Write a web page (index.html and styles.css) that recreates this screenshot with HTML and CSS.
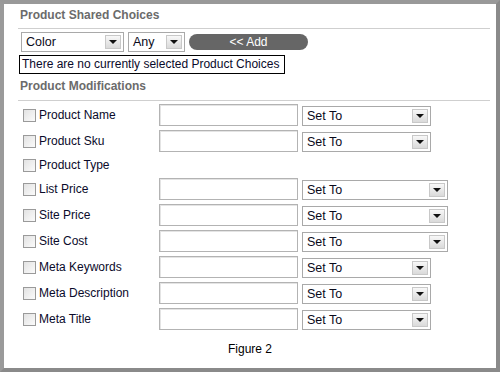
FILE: index.html
```html
<!DOCTYPE html>
<html lang="en">
<head>
    <meta charset="UTF-8">
    <title>Product Modifications</title>
    <link rel="stylesheet" href="styles.css">
</head>
<body>
    <div class="frame">
        <div class="section-title first">Product Shared Choices</div>
        <div class="choice-bar">
            <div class="select sel-color"><span>Color</span><span class="arrow"></span></div>
            <div class="select sel-any"><span>Any</span><span class="arrow"></span></div>
            <button class="add-btn">&lt;&lt; Add</button>
        </div>
        <div class="notice">There are no currently selected Product Choices</div>

        <div class="section-title">Product Modifications</div>
        <div class="mods">
            <div class="row">
                <label class="field"><input type="checkbox">Product Name</label>
                <input class="text" type="text">
                <div class="select set-short"><span>Set To</span><span class="arrow"></span></div>
            </div>
            <div class="row">
                <label class="field"><input type="checkbox">Product Sku</label>
                <input class="text" type="text">
                <div class="select set-short"><span>Set To</span><span class="arrow"></span></div>
            </div>
            <div class="row only-check">
                <label class="field"><input type="checkbox">Product Type</label>
            </div>
            <div class="row">
                <label class="field"><input type="checkbox">List Price</label>
                <input class="text" type="text">
                <div class="select set-long"><span>Set To</span><span class="arrow"></span></div>
            </div>
            <div class="row">
                <label class="field"><input type="checkbox">Site Price</label>
                <input class="text" type="text">
                <div class="select set-long"><span>Set To</span><span class="arrow"></span></div>
            </div>
            <div class="row">
                <label class="field"><input type="checkbox">Site Cost</label>
                <input class="text" type="text">
                <div class="select set-long"><span>Set To</span><span class="arrow"></span></div>
            </div>
            <div class="row">
                <label class="field"><input type="checkbox">Meta Keywords</label>
                <input class="text" type="text">
                <div class="select set-short"><span>Set To</span><span class="arrow"></span></div>
            </div>
            <div class="row">
                <label class="field"><input type="checkbox">Meta Description</label>
                <input class="text" type="text">
                <div class="select set-short"><span>Set To</span><span class="arrow"></span></div>
            </div>
            <div class="row">
                <label class="field"><input type="checkbox">Meta Title</label>
                <input class="text" type="text">
                <div class="select set-short"><span>Set To</span><span class="arrow"></span></div>
            </div>
        </div>

        <div class="caption">Figure 2</div>
    </div>
</body>
</html>
```

FILE: styles.css
```css
* {
    box-sizing: border-box;
}

body {
    margin: 0;
    font-family: "Liberation Sans", Arial, sans-serif;
    font-size: 12px;
    color: #000;
    background-color: #fff;
}

.frame {
    width: 500px;
    height: 372px;
    border: 4px solid #8a8a8a;
    border-left-color: #9a9a9a;
    border-top-color: #999;
    padding: 0 6px 0 14px;
}

.section-title {
    color: #6b6b6b;
    font-weight: bold;
    line-height: 14px;
    padding: 5px 0 7px 2px;
    border-bottom: 1px solid #cfcfcf;
}

.section-title.first {
    padding: 4px 0 6px 2px;
}

.choice-bar {
    display: flex;
    align-items: center;
    gap: 4px;
    height: 20px;
    margin-top: 3px;
    padding-left: 3px;
}

.select {
    display: flex;
    align-items: center;
    justify-content: space-between;
    height: 20px;
    border: 1px solid #a9a9a9;
    background-color: #fff;
    padding: 0 2px 0 4px;
    font-size: 12.5px;
    color: #0a0a1a;
}

.arrow {
    width: 16px;
    height: 14px;
    border: 1px solid #c8c8c8;
    background: linear-gradient(#f8f8f8, #dadada);
    display: flex;
    align-items: center;
    justify-content: center;
}

.arrow::after {
    content: "";
    border-left: 4px solid transparent;
    border-right: 4px solid transparent;
    border-top: 4px solid #111;
}

.sel-color {
    width: 103px;
}

.sel-any {
    width: 57px;
}

.add-btn {
    width: 119px;
    height: 16px;
    border: none;
    border-radius: 8px;
    background-color: #666;
    color: #fff;
    font-family: inherit;
    font-size: 12px;
    padding: 0;
    line-height: 16px;
}

.notice {
    width: 266px;
    height: 19px;
    margin: 3px 0 0 1px;
    border: 1px solid #000;
    padding: 0 2px;
    line-height: 17px;
    white-space: nowrap;
    color: #0a0a2a;
}

.mods {
    padding-top: 3px;
}

.row {
    display: grid;
    grid-template-columns: 141px 139px auto;
    height: 22px;
    margin-bottom: 4px;
}

.row.only-check {
    height: 18px;
}

.field {
    display: flex;
    align-items: center;
    padding-left: 5px;
    white-space: nowrap;
    color: #0a0a2a;
}

.field input {
    appearance: none;
    width: 13px;
    height: 13px;
    margin: 0 3px 0 0;
    border: 1px solid #9a9a9a;
    background: linear-gradient(135deg, #e2e2e2, #fbfbfb);
}

.text {
    width: 139px;
    height: 22px;
    margin: 0;
    border: 1px solid #b3b3b3;
    box-shadow: inset 1px 1px 0 #e4e4e4;
}

.row .select {
    align-self: end;
    margin-left: 4px;
}

.set-short {
    width: 129px;
}

.set-long {
    width: 146px;
}

.caption {
    margin-top: 12px;
    padding-right: 8px;
    text-align: center;
    line-height: 14px;
}
```
